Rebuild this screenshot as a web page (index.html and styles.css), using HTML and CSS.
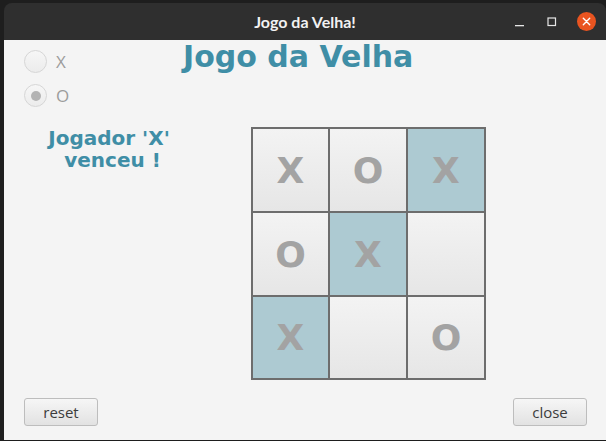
FILE: index.html
```html
<!DOCTYPE html>
<html>
<head>
<meta charset="utf-8">
<link rel="stylesheet" href="styles.css">
</head>
<body>
<div class="screen">
  <div class="window">
    <div class="titlebar">
      <span class="wtitle">Jogo da Velha!</span>
      <div class="wctrls">
        <svg class="ic-min" width="10" height="10" viewBox="0 0 10 10"><rect x="0" y="7" width="9" height="1.3" fill="#e6e6e6"/></svg>
        <svg class="ic-max" width="10" height="10" viewBox="0 0 10 10"><rect x="1" y="1" width="7.5" height="7.5" fill="none" stroke="#e6e6e6" stroke-width="1.2"/></svg>
        <svg class="ic-close" width="19" height="19" viewBox="0 0 19 19"><circle cx="9.5" cy="9.5" r="9.5" fill="#e95420"/><path d="M6.3 6.3 L12.7 12.7 M12.7 6.3 L6.3 12.7" stroke="#fff" stroke-width="1.4" stroke-linecap="round"/></svg>
      </div>
    </div>
    <div class="content">
      <div class="top">
        <div class="radios">
          <label class="radio"><span class="dot"></span><span class="rlabel">X</span></label>
          <label class="radio"><span class="dot on"></span><span class="rlabel">O</span></label>
        </div>
        <h1 class="title">Jogo da Velha</h1>
      </div>
      <div class="main">
        <div class="status">Jogador 'X'<br>&nbsp;venceu !</div>
        <div class="board">
          <div class="cell">X</div>
          <div class="cell">O</div>
          <div class="cell win">X</div>
          <div class="cell">O</div>
          <div class="cell win">X</div>
          <div class="cell"></div>
          <div class="cell win">X</div>
          <div class="cell"></div>
          <div class="cell">O</div>
        </div>
      </div>
      <div class="bottom">
        <button class="btn">reset</button>
        <button class="btn">close</button>
      </div>
    </div>
  </div>
</div>
</body>
</html>
```

FILE: styles.css
```css
html, body {
  margin: 0;
  padding: 0;
  background: #1e1e1e;
}
.screen {
  width: 606px;
  height: 441px;
  overflow: hidden;
  background: #1e1e1e;
  padding: 3px 0 0 4px;
  box-sizing: border-box;
}
.window {
  width: 602px;
  height: 437px;
  border-radius: 8px 8px 0 0;
  overflow: hidden;
  display: flex;
  flex-direction: column;
}
.titlebar {
  height: 37px;
  flex: none;
  background: #2f2f2f;
  position: relative;
  display: flex;
  align-items: center;
  justify-content: center;
}
.wtitle {
  font-family: "Lato", "DejaVu Sans", sans-serif;
  font-weight: bold;
  font-size: 16px;
  color: #f2f2f2;
  margin-top: 0;
}
.wctrls {
  position: absolute;
  right: 10px;
  top: 0;
  height: 37px;
  display: flex;
  align-items: center;
}
.ic-min { margin-right: 22px; margin-top: 3px; }
.ic-max { margin-right: 20px; margin-top: 1px; }
.ic-close { margin-top: 0; }
.content {
  flex: 1;
  background: #f4f4f4;
  display: flex;
  flex-direction: column;
}
.top {
  display: flex;
  height: 87px;
}
.radios {
  width: 158px;
  padding: 10px 0 0 20px;
  display: flex;
  flex-direction: column;
  gap: 11px;
}
.radio {
  display: flex;
  align-items: center;
  height: 23px;
}
.dot {
  width: 21px;
  height: 21px;
  border-radius: 50%;
  border: 1px solid #d6d6d6;
  background: linear-gradient(#f6f6f6, #ececec);
  display: flex;
  align-items: center;
  justify-content: center;
}
.dot.on::after {
  content: "";
  width: 10px;
  height: 10px;
  border-radius: 50%;
  background: #b3b3b3;
}
.rlabel {
  font-family: "Open Sans", "DejaVu Sans", sans-serif;
  font-size: 17px;
  color: #9c9c9c;
  margin-left: 9px;
}
.title {
  margin: 0 0 0 1px;
  padding-top: 0;
  font-family: "DejaVu Sans", sans-serif;
  font-weight: bold;
  font-size: 30px;
  line-height: 34px;
  color: #3f8ea6;
}
.main {
  display: flex;
  height: 271px;
}
.status {
  width: 210px;
  text-align: center;
  font-family: "DejaVu Sans", sans-serif;
  font-weight: bold;
  font-size: 20px;
  line-height: 22px;
  color: #3f8ea6;
}
.board {
  margin-left: 37px;
  display: grid;
  grid-template-columns: 75px 76px 76px;
  grid-template-rows: 82px 82px 81px;
  gap: 2px;
  padding: 2px;
  background: #6d6d6d;
  align-self: flex-start;
}
.cell {
  background: linear-gradient(#f3f3f3, #e6e6e6);
  display: flex;
  align-items: center;
  justify-content: center;
  font-family: "DejaVu Sans", sans-serif;
  font-weight: bold;
  font-size: 36px;
  color: #a3a3a3;
}
.cell.win {
  background: #adcad2;
}
.bottom {
  display: flex;
  justify-content: space-between;
  padding: 0 19px 0 20px;
}
.btn {
  width: 74px;
  height: 28px;
  border: 1px solid #bdbdbd;
  border-radius: 3px;
  background: linear-gradient(#f6f6f6, #e2e2e2);
  font-family: "Open Sans", "DejaVu Sans", sans-serif;
  font-size: 15px;
  color: #3c3c3c;
  padding: 0;
}
```
